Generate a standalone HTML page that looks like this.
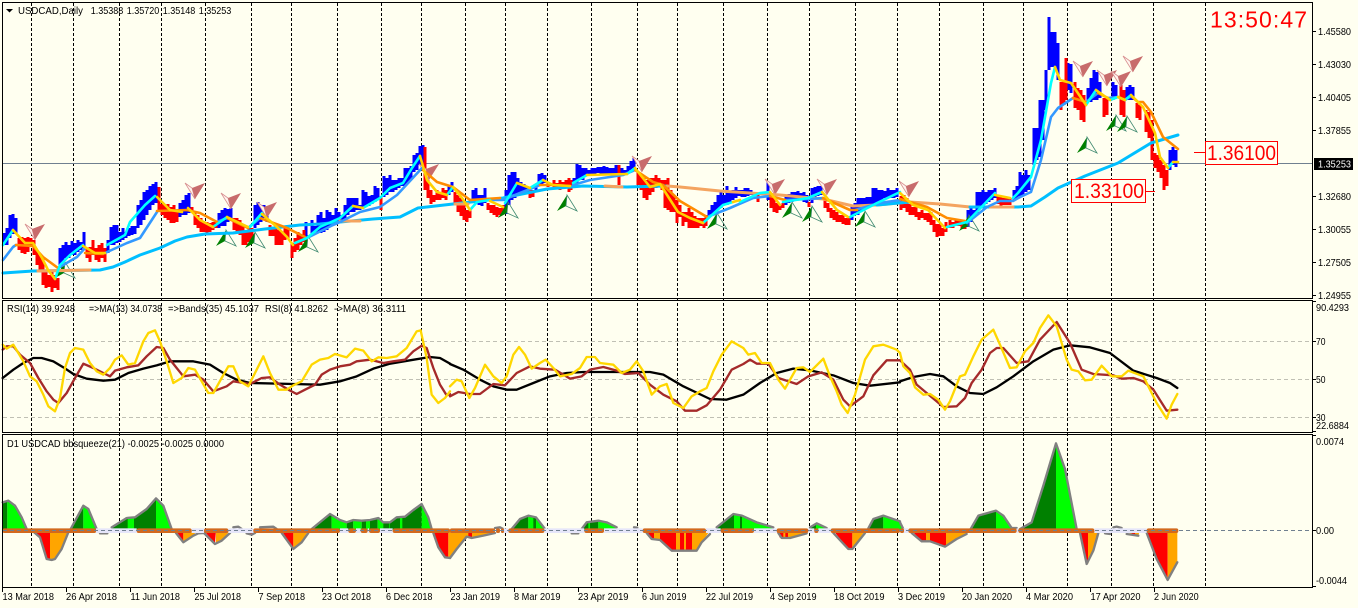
<!DOCTYPE html>
<html><head><meta charset="utf-8"><title>USDCAD,Daily</title>
<style>
html,body{margin:0;padding:0;background:#fffff0;width:1358px;height:608px;overflow:hidden}
svg{display:block;position:absolute;left:0;top:0}
text{font-family:"Liberation Sans",sans-serif;font-size:10.5px;fill:#000}
.l{fill:none;stroke-linejoin:round;stroke-linecap:round}
</style></head><body>
<svg width="1358" height="608" viewBox="0 0 1358 608">
<rect width="1358" height="608" fill="#fffff0"/>
<!-- grid -->
<path d="M31.5 3V587M73.5 3V587M119.5 3V587M161.5 3V587M205.5 3V587M251.5 3V587M291.5 3V587M337.5 3V587M381.5 3V587M421.5 3V587M465.5 3V587M505.5 3V587M547.5 3V587M591.5 3V587M637.5 3V587M677.5 3V587M723.5 3V587M767.5 3V587M809.5 3V587M855.5 3V587M897.5 3V587M939.5 3V587M983.5 3V587M1023.5 3V587M1067.5 3V587M1111.5 3V587M1153.5 3V587M1205.5 3V587" stroke="#000" stroke-width="1" stroke-dasharray="3 2" fill="none" shape-rendering="crispEdges"/>
<path d="M3 341.5H1312M3 379.5H1312M3 417.5H1312" stroke="#c0c0b4" stroke-dasharray="4 3" fill="none" shape-rendering="crispEdges"/>
<path d="M3 163.5H1313" stroke="#708090" fill="none" shape-rendering="crispEdges"/>

<!-- candles -->
<path fill="none" stroke="#0000ff" stroke-width="3" shape-rendering="crispEdges" d="M4 233V245M7 228V245M10 215V238M13 214V234M16 218V233
M60 248V268M63 245V262M66 242V258M69 245V258M72 241V255M75 243V255M78 240V252M81 242V250M84 232V248
M108 240V253M111 227V245M114 225V245M117 225V243M120 232V242M123 228V240M126 232V238M129 228V236M132 226V235M135 226V234M138 205V228M141 200V225M144 192V220M147 190V215M150 186V210M153 184V205M156 182V203
M180 203V217M183 200V215M186 195V215M189 193V213
M219 213V228M222 210V226M225 208V226M228 209V222M231 208V220
M255 205V228M258 202V225M261 205V222M264 205V218M267 210V222
M306 222V240M312 220V235M315 226V232
M318 215V233M321 212V233M324 218V232M327 210V230M330 212V226M333 215V225M336 208V222M339 212V222M342 215V223M345 205V220M348 198V215M351 198V212M354 198V212M357 198V210M360 205V210M363 190V208M366 192V207M369 196V206M372 195V204M375 186V202M378 188V200
M384 176V197M387 178V195M390 175V192M393 180V192M396 180V190M399 178V188M402 178V186M405 168V186M408 168V183M411 166V180M414 155V172M417 153V170M420 146V165M423 145V163
M449 186V195M452 182V192
M473 190V203M476 188V203M479 195V205M482 195V206M485 188V203
M506 190V214M509 175V205M512 172V200M515 172V198M518 178V195M521 182V195M524 184V192M527 187V193
M536 185V190M539 174V185M542 173V184M545 175V183
M574 178V186M577 164V184M580 165V180M583 168V180M586 168V176M589 170V176M592 168V174M595 168V175M598 167V173M601 167V175M604 166V174M607 167V174M610 168V175M613 168V175M616 165V175
M622 168V174M625 170V174M628 166V172M631 161V170M634 158V168
M709 210V218M712 205V216M715 202V214M718 195V210M721 192V208M724 195V205M727 186V205M730 192V203M733 190V200M736 187V198M739 190V196M742 190V197M745 188V197M748 188V196M751 190V195M754 192V197
M768 182V200
M786 195V205M789 194V203M792 192V202M795 192V200M798 191V200M801 193V200M804 192V202M807 195V203
M812 188V203M815 187V198M818 186V196M821 186V195
M852 207V220M855 203V215M858 198V215M861 198V212M864 198V210M867 197V206M870 197V204M873 188V205M876 188V203M879 190V202M882 190V202M885 191V198M888 188V197M891 190V198M894 190V198M897 188V197
M968 210V227M971 207V222M974 210V218M977 192V213M980 192V208M983 190V206M986 192V204M989 190V202M992 190V200M995 188V198
M1014 190V200M1017 186V198M1020 172V196M1023 175V195M1026 170V192M1029 175V190
M1034 128V165M1037 128V160M1040 100V157M1043 100V140M1046 70V110M1049 17V70M1052 32V67M1055 32V67M1058 43V80
M1068 63V90M1071 64V93
M1088 88V102M1091 78V102M1094 70V100M1097 72V100M1100 82V98
M1113 82V100M1116 85V98
M1127 87V100M1130 85V100M1133 87V100
M1170 150V170M1173 147V165M1176 150V167"/>
<path fill="none" stroke="#ff0000" stroke-width="3" shape-rendering="crispEdges" d="M19 238V250M22 237V253M25 238V254M28 237V252M31 238V247M34 240V255M37 250V265M40 255V270M43 258V285M46 272V288M49 275V287M52 272V292M55 275V288M58 278V290
M87 248V258M90 247V262M93 240V255M96 248V260M99 245V262M102 243V258M105 248V262
M159 187V212M162 204V215M165 205V218M168 204V220M171 207V223M174 205V223M177 210V222
M192 207V212M195 213V225M198 215V228M201 218V232M204 222V232M207 222V233M210 223V232M213 222V230M216 222V228
M234 218V230M237 218V232M240 220V235M243 226V245M246 232V245M249 228V242M252 228V240
M270 225V236M273 228V236M276 228V245M279 230V245M282 232V245M285 228V240M288 228V238
M292 243V258M295 238V252M298 232V250M301 235V245M304 230V242
M381 197V210
M425 147V190M428 180V198M431 190V204M434 195V202M437 190V200M440 192V200M443 188V198M446 190V200
M455 192V205M458 195V212M461 198V216M464 205V220M467 210V222M470 208V218
M488 203V210M491 205V213M494 205V215M497 207V217M500 208V215M503 205V212
M530 190V198M533 190V197
M548 182V187M551 184V186M554 180V188M557 183V187M560 180V190M563 182V186M566 180V188M569 178V192M571 180V190
M619 165V185
M638 172V185M641 175V190M644 178V198M647 180V200M650 178V195M653 178V192M656 175V188M659 178V186M662 180V190M665 180V208M668 178V210M671 190V212M674 195V212M677 200V223M680 205V217M683 212V226M686 212V222M689 208V228M692 212V228M695 216V228M698 218V228M701 218V226M704 218V228M706 215V226
M758 194V202
M771 197V208M774 198V212M777 203V213M780 205V210M783 203V208
M809 202V207
M825 200V208M828 203V212M831 208V218M834 210V220M837 212V222M840 215V222M843 215V224M846 218V225M849 216V225
M901 196V210M904 195V208M907 198V212M910 204V215M913 207V215M916 207V217M919 212V220M922 210V218M925 213V220M928 213V222M931 212V225M934 220V232M937 224V237M940 224V236M943 228V236M946 222V232
M950 220V228M953 222V228M956 219V226M959 220V226M962 220V229M965 222V229
M998 196V204M1001 196V206M1004 198V205M1007 197V205M1010 198V205
M1061 82V110M1064 82V105M1066 58V100
M1075 82V108M1078 88V110M1081 90V120M1084 95V122
M1104 98V117M1107 97V115
M1121 85V115M1124 90V117
M1137 103V118M1140 105V120
M1146 110V132M1149 112V138M1152 120V160M1155 153V168M1158 155V172M1161 160V178M1164 165V190M1167 170V186"/>

<!-- arrows -->
<defs>
<g id="d"><polygon points="0,0 10,16 7,5" fill="#fff4ee" stroke="#d89090" stroke-width=".8"/><polygon points="7,5 20,0 10,16" fill="#c86c6c"/></g>
<g id="u"><polygon points="0,16 10,0 9,11" fill="#008000"/><polygon points="10,0 20,16 9,11" fill="none" stroke="#408a70" stroke-width=".8"/></g>
</defs>
<use href="#d" x="25" y="224"/><use href="#d" x="185" y="183"/><use href="#d" x="221" y="193"/><use href="#d" x="257" y="202"/><use href="#d" x="419" y="164"/><use href="#d" x="632" y="156"/><use href="#d" x="765" y="179"/><use href="#d" x="817" y="179"/><use href="#d" x="899" y="181"/><use href="#d" x="1073" y="61"/><use href="#d" x="1097" y="70"/><use href="#d" x="1111" y="71"/><use href="#d" x="1123" y="56"/>
<use href="#u" x="55" y="262"/><use href="#u" x="216" y="230"/><use href="#u" x="245" y="232"/><use href="#u" x="298" y="236"/><use href="#u" x="498" y="202"/><use href="#u" x="557" y="195"/><use href="#u" x="707" y="213"/><use href="#u" x="782" y="202"/><use href="#u" x="802" y="206"/><use href="#u" x="855" y="211"/><use href="#u" x="959" y="215"/><use href="#u" x="1077" y="137"/><use href="#u" x="1106" y="115"/><use href="#u" x="1117" y="116"/>

<!-- long MA -->
<g class="l" stroke-width="3">
<polyline stroke="#00bfff" points="3,273 33,271 100,270 113,267 125,262 140,255 160,248 175,241 187,237 205,234 233,233 265,229 300,225 320,224 340,222 373,219 400,217 410,212 418,208 453,204 480,201 503,198 517,195 547,189 583,186 627,187 667,186"/>
<polyline stroke="#f4a460" points="667,186 680,187 720,191 780,195 823,199 853,206 877,205 910,202 940,204 970,207"/>
<polyline stroke="#00bfff" points="970,207 1018,207 1031,206 1045,197 1058,188 1085,176 1118,163 1151,143 1178,135"/>
<polyline stroke="#00bfff" points="877,205 910,202"/>
<polyline stroke="#f4a460" points="38,271 90,270"/>
<polyline stroke="#f4a460" points="340,221 360,221"/>
<polyline stroke="#f4a460" points="455,204 468,204"/>
<polyline stroke="#f4a460" points="990,207 1013,207"/>
<polyline stroke="#f4a460" points="605,186 622,187"/>
</g>

<!-- slow line -->
<g class="l" stroke-width="2.6" stroke="#3399ff">
<polyline points="3,260 13,247 16,245"/>
<polyline points="58,268 77,257 85,248"/>
<polyline points="105,253 127,243 140,238 157,212"/>
<polyline points="217,222 227,218"/>
<polyline points="248,228 260,218"/>
<polyline points="307,238 333,225 340,222 360,212 380,207 397,195 422,168"/>
<polyline points="470,200 503,200 520,193 540,185"/>
<polyline points="573,185 590,180 623,175 635,170"/>
<polyline points="707,217 730,208 753,198 770,196"/>
<polyline points="785,200 810,199 823,198"/>
<polyline points="855,210 880,203 900,200"/>
<polyline points="967,223 987,207 1000,201 1013,201 1020,197"/>
<polyline points="1018,198 1031,192 1041,160 1051,117 1058,108 1073,98"/>
<polyline points="1086,102 1098,93"/>
<polyline points="1108,98 1118,97"/>
<polyline points="1125,100 1131,96"/>
</g>
<g class="l" stroke-width="2.6" stroke="#ff8c00">
<polyline points="16,245 33,246 43,257 58,268"/>
<polyline points="85,253 103,254"/>
<polyline points="157,211 187,210 200,213 217,222"/>
<polyline points="227,218 248,228"/>
<polyline points="260,218 287,228 307,238"/>
<polyline points="423,170 437,182 453,187 470,200 500,198"/>
<polyline points="540,185 553,185 570,186"/>
<polyline points="635,170 653,182 663,185 680,201 707,217"/>
<polyline points="770,196 785,200"/>
<polyline points="823,198 850,210 857,210"/>
<polyline points="900,199 927,207 947,218 965,221"/>
<polyline points="1073,98 1086,102"/>
<polyline points="1098,93 1108,98"/>
<polyline points="1118,97 1125,100"/>
<polyline points="1131,96 1138,102 1143,102 1151,112 1163,137 1178,149"/>
</g>

<!-- fast line -->
<g class="l" stroke-width="2.6" stroke="#00ffff">
<polyline points="3,245 13,230"/>
<polyline points="55,279 60,265 70,255 83,245"/>
<polyline points="107,245 125,235 130,222 145,205 155,196"/>
<polyline points="213,227 227,217"/>
<polyline points="250,227 262,213"/>
<polyline points="295,243 307,238 320,227 340,218 353,206"/>
<polyline points="363,208 380,198 390,188 403,183 412,168 420,156"/>
<polyline points="447,195 453,187"/>
<polyline points="470,210 477,202 490,200"/>
<polyline points="505,203 517,183"/>
<polyline points="530,188 543,180"/>
<polyline points="573,183 587,175"/>
<polyline points="627,174 635,168"/>
<polyline points="703,223 723,205 733,202"/>
<polyline points="740,202 760,193 770,192"/>
<polyline points="783,202 808,198 822,192"/>
<polyline points="850,217 877,203 900,192"/>
<polyline points="947,227 967,222 995,193"/>
<polyline points="1013,198 1018,193 1031,177 1041,140 1051,83 1055,67"/>
<polyline points="1086,105 1096,90"/>
<polyline points="1110,100 1118,97"/>
<polyline points="1125,100 1131,95"/>
<polyline points="1168,168 1173,162"/>
</g>
<g class="l" stroke-width="2.6" stroke="#ffd000">
<polyline points="13,230 25,243 33,243 42,258 48,270 55,279"/>
<polyline points="83,246 95,253 105,253"/>
<polyline points="157,197 170,210 182,212"/>
<polyline points="188,208 200,220 213,227"/>
<polyline points="227,217 248,227"/>
<polyline points="262,214 277,227 287,237 293,245"/>
<polyline points="353,206 363,208"/>
<polyline points="420,156 427,180 437,192 447,195"/>
<polyline points="453,187 462,198 470,210"/>
<polyline points="490,201 503,207"/>
<polyline points="517,183 530,188"/>
<polyline points="543,180 553,185 570,186"/>
<polyline points="587,175 627,174"/>
<polyline points="635,168 650,187 660,184 678,212 690,218 703,223"/>
<polyline points="733,202 740,200"/>
<polyline points="770,192 780,205"/>
<polyline points="822,192 837,210 848,217"/>
<polyline points="900,193 913,205 928,210 945,228"/>
<polyline points="995,195 1010,198"/>
<polyline points="1055,67 1060,80 1071,83 1086,105"/>
<polyline points="1096,90 1110,100"/>
<polyline points="1118,97 1125,100"/>
<polyline points="1131,95 1143,107 1155,133 1160,157 1168,168"/>
<polyline points="1173,162 1178,162"/>
</g>

<!-- labels -->
<path d="M1194 152.5H1205M1145 191.5H1155" stroke="#ff0000" fill="none" shape-rendering="crispEdges"/>
<rect x="1205.5" y="141.5" width="72" height="23" fill="#fffff0" stroke="#ff0000"/>
<text x="1207" y="160" style="font-size:21px;fill:#ff0000" textLength="69" lengthAdjust="spacingAndGlyphs">1.36100</text>
<rect x="1071.5" y="179.5" width="74" height="23" fill="#fffff0" stroke="#ff0000"/>
<text x="1074" y="198" style="font-size:21px;fill:#ff0000" textLength="70" lengthAdjust="spacingAndGlyphs">1.33100</text>
<text x="1210" y="27.5" style="font-size:23px;fill:#ff0000" textLength="97">13:50:47</text>

<!-- RSI -->
<g transform="translate(0,298) scale(.33333)" class="l" stroke-width="7">
<polyline stroke="#000" points="8,240 40,215 70,195 100,180 125,180 160,190 190,208 220,228 260,242 310,248 345,245 385,225 430,212 470,202 510,190 580,190 630,200 670,225 710,245 750,255 880,258 960,260 1020,250 1070,235 1120,212 1170,197 1230,187 1290,177 1320,180 1350,197"/>
<polyline stroke="#a52a2a" points="8,155 20,145 40,145 60,170 90,195 115,240 140,280 160,305 175,315 200,285 225,240 250,197 280,210 310,225 330,235 345,218 380,208 415,202 440,175 470,147 490,150 510,185 530,210 550,235 585,230 610,245 640,280 680,265 700,250 750,258 785,240 810,238 840,260 865,275 890,288 915,275 945,260 965,230 990,215 1020,205 1050,200 1070,190 1110,185 1150,195 1180,190 1215,185 1240,160 1265,143 1280,150 1300,210 1320,260 1340,292 1350,288"/>
<polyline stroke="#ffd700" points="8,140 20,152 40,140 55,165 70,190 90,235 110,250 130,290 145,325 165,340 180,300 195,210 210,165 225,150 250,155 270,195 290,220 310,230 330,210 345,185 365,172 385,200 405,195 430,130 445,105 465,97 480,130 500,190 520,255 545,240 565,210 585,215 605,250 625,285 640,285 665,240 685,205 700,205 720,250 745,265 770,215 790,175 810,225 835,275 860,275 880,262 905,250 935,200 960,185 985,180 1005,168 1040,178 1065,152 1090,158 1115,190 1135,178 1160,180 1190,175 1220,150 1250,100 1262,97 1280,180 1295,290 1315,315 1335,300 1350,280"/>
</g>
<g transform="translate(450,298) scale(.33333)" class="l" stroke-width="7">
<polyline stroke="#000" points="0,198 40,215 90,245 130,265 170,275 200,275 250,255 300,235 350,225 400,222 600,222 640,230 700,265 780,303 830,305 880,290 930,255 980,225 1030,212 1080,217 1150,232 1210,255 1260,263 1350,253"/>
<polyline stroke="#a52a2a" points="0,295 25,282 60,288 90,288 130,258 165,262 200,225 240,205 270,212 315,215 360,242 395,235 420,215 460,207 500,218 525,228 565,225 600,260 640,290 680,310 705,338 740,338 770,322 810,275 845,215 880,198 900,185 920,197 955,197 985,240 1040,258 1075,235 1115,223 1150,245 1180,305 1200,325 1240,295 1270,232 1310,187 1350,187"/>
<polyline stroke="#ffd700" points="0,265 20,245 35,250 58,300 75,270 105,200 130,235 155,255 170,235 190,170 207,147 225,170 245,212 270,195 287,185 310,210 330,235 365,228 390,210 410,177 435,177 450,195 490,200 515,225 540,215 560,190 580,220 605,290 630,265 650,258 670,315 700,330 725,295 750,280 770,270 790,220 815,170 845,130 880,150 895,170 915,165 935,195 960,195 985,245 1005,272 1040,210 1060,208 1080,222 1120,182 1140,235 1160,280 1175,320 1193,345 1215,290 1245,185 1270,145 1300,140 1340,155 1350,165"/>
</g>
<g transform="translate(900,298) scale(.33333)" class="l" stroke-width="7">
<polyline stroke="#000" points="0,250 40,237 90,228 130,235 170,265 210,285 250,288 290,268 340,235 400,190 460,155 510,142 570,148 630,165 700,218 770,240 810,255 832,270"/>
<polyline stroke="#a52a2a" points="0,187 30,215 50,260 80,285 110,310 130,327 170,325 195,300 215,255 245,215 270,165 290,150 310,150 350,195 385,190 420,125 470,72 510,135 545,215 580,228 640,232 665,242 700,240 730,250 760,275 800,338 832,335"/>
<polyline stroke="#ffd700" points="0,165 10,205 30,225 45,268 70,290 90,288 115,305 135,335 150,310 180,235 195,230 220,175 245,125 280,95 300,140 330,210 350,208 375,160 400,135 420,90 445,52 470,85 500,185 515,215 535,220 555,247 575,245 605,203 635,235 665,235 685,218 730,235 745,265 770,315 800,362 815,320 832,288"/>
</g>

<!-- squeeze -->
<g transform="translate(0,434) scale(.33333)">
<g>
<polygon fill="#008000" points="8,290 8,205 22,201 22,290"/>
<polygon fill="#00ff00" points="22,290 22,201 45,215 65,250 80,285 82,290"/>
<polygon fill="#ff0000" points="100,290 120,310 140,375 150,378 150,290"/>
<polygon fill="#ffa500" points="150,290 150,378 165,375 185,345 205,290"/>
<polygon fill="#008000" points="212,290 250,215 250,290"/>
<polygon fill="#00ff00" points="250,290 250,215 265,225 290,290"/>
<polygon fill="#008000" points="335,290 335,280 380,252 405,250 440,225 468,193 468,290"/>
<polygon fill="#00ff00" points="383,290 383,252 402,250 402,290"/>
<polygon fill="#00ff00" points="468,290 468,193 490,215 515,285 515,290"/>
<polygon fill="#ff0000" points="528,290 550,325 550,290"/>
<polygon fill="#ffa500" points="550,290 550,325 580,305 590,290"/>
<polygon fill="#ff0000" points="612,290 645,330 648,290"/>
<polygon fill="#ffa500" points="648,290 648,330 665,320 690,290"/>
<polygon fill="#ff0000" points="738,290 755,302 760,290"/>
<polygon fill="#ff0000" points="845,290 880,345 880,290"/>
<polygon fill="#ffa500" points="880,290 880,345 905,325 925,290"/>
<polygon fill="#008000" points="935,290 990,240 995,240 995,290"/>
<polygon fill="#00ff00" points="995,290 995,240 1020,258 1040,265 1040,290"/>
<polygon fill="#008000" points="1040,290 1040,265 1060,258 1060,290"/>
<polygon fill="#00ff00" points="1060,290 1060,258 1085,260 1085,290"/>
<polygon fill="#008000" points="1085,290 1085,258 1098,258 1098,290"/>
<polygon fill="#00ff00" points="1098,290 1098,258 1110,260 1110,290"/>
<polygon fill="#008000" points="1110,290 1110,258 1133,252 1133,290"/>
<polygon fill="#00ff00" points="1133,290 1133,252 1150,265 1170,265 1170,290"/>
<polygon fill="#008000" points="1150,290 1150,265 1168,265 1168,290"/>
<polygon fill="#008000" points="1170,290 1170,265 1190,250 1215,248 1240,228 1265,210 1265,290"/>
<polygon fill="#00ff00" points="1200,290 1200,248 1207,248 1207,290"/>
<polygon fill="#00ff00" points="1265,290 1265,210 1285,250 1297,290"/>
<polygon fill="#ff0000" points="1297,290 1315,340 1335,370 1345,372 1345,290"/>
<polygon fill="#ffa500" points="1345,290 1345,372 1350,372 1350,290"/>
</g>
<g class="l" stroke="#808080" stroke-width="7">
<polyline points="8,205 25,200 45,215 65,250 80,285"/>
<polyline points="100,293 120,310 140,375 155,378 165,375 185,345 205,295"/>
<polyline points="212,285 250,215 265,225 290,285"/>
<polyline points="335,280 380,252 405,250 440,225 468,193 490,215 515,285"/>
<polyline points="528,297 550,325 580,305 595,298 612,297 645,330 665,320 690,297"/>
<polyline points="700,280 715,278 725,285"/>
<polyline points="740,298 755,302 765,297"/>
<polyline points="780,280 820,278 830,285"/>
<polyline points="845,297 880,345 905,325 925,297"/>
<polyline points="935,285 990,240 1020,258 1040,265 1060,258 1085,260 1110,258 1135,252 1150,265 1170,265 1190,250 1215,248 1240,228 1265,210 1285,250 1295,285"/>
<polyline points="1300,297 1315,340 1335,370 1350,372"/>
<polyline points="300,298 322,298"/>
</g>
<g fill="#e6e6fa"><rect x="288" y="283" width="122" height="14"/><rect x="575" y="283" width="37" height="14"/><rect x="685" y="283" width="75" height="14"/><rect x="1020" y="283" width="25" height="14"/><rect x="1068" y="283" width="14" height="14"/><rect x="1103" y="283" width="4" height="14"/><rect x="1140" y="283" width="38" height="14"/></g>
<g fill="#d2691e"><rect x="8" y="283" width="280" height="14" rx="5"/><rect x="410" y="283" width="165" height="14" rx="6"/><rect x="612" y="283" width="73" height="14" rx="6"/><rect x="760" y="283" width="260" height="14" rx="6"/><rect x="1045" y="283" width="23" height="14" rx="6"/><rect x="1082" y="283" width="21" height="14" rx="6"/><rect x="1107" y="283" width="33" height="14" rx="6"/><rect x="1178" y="283" width="172" height="14" rx="6"/></g>
</g>
<g transform="translate(450,434) scale(.33333)">
<polygon fill="#ffa500" points="0,290 0,372 20,345 50,308 55,310 65,312 100,305 135,290"/>
<polygon fill="#ff0000" points="55,290 55,310 66,310 66,290"/>
<polygon fill="#008000" points="185,290 210,255 235,245 235,290"/>
<polygon fill="#00ff00" points="235,290 235,245 258,250 285,285 285,290"/>
<polygon fill="#008000" points="250,290 250,248 258,250 258,290"/>
<polygon fill="#008000" points="395,290 410,265 445,260 445,290"/>
<polygon fill="#00ff00" points="445,290 445,262 470,265 500,282 500,290"/>
<polygon fill="#00ff00" points="415,290 415,264 420,264 420,290"/>
<polygon fill="#ffa500" points="590,290 605,315 630,318 665,350 740,350 755,325 780,290"/>
<g fill="#ff0000"><polygon points="590,290 605,315 612,316 612,290"/><polygon points="630,290 630,318 665,350 678,350 678,290"/><rect x="690" y="290" width="12" height="60"/><rect x="708" y="290" width="18" height="60"/></g>
<polygon fill="#008000" points="800,290 800,280 850,240 852,240 852,290"/>
<polygon fill="#00ff00" points="852,290 852,240 876,245 920,265 970,280 970,290"/>
<rect x="870" y="243" width="6" height="47" fill="#008000"/>
<polygon fill="#ffa500" points="985,290 995,312 1020,312 1070,295 1070,290"/>
<rect x="988" y="290" width="12" height="20" fill="#ff0000"/><rect x="1006" y="290" width="8" height="20" fill="#ff0000"/>
<polygon fill="#008000" points="1080,290 1080,280 1098,268 1098,290"/>
<polygon fill="#00ff00" points="1098,290 1098,268 1130,282 1130,290"/>
<polygon fill="#ff0000" points="1150,290 1195,345 1207,345 1207,290"/>
<polygon fill="#ffa500" points="1207,290 1207,345 1245,290"/>
<polygon fill="#008000" points="1255,290 1255,283 1270,255 1300,245 1300,290"/>
<polygon fill="#00ff00" points="1300,290 1300,245 1350,262 1350,290"/>
<g class="l" stroke="#808080" stroke-width="7">
<polyline points="0,372 20,345 50,308 65,312 100,305 135,297"/>
<polyline points="135,282 150,280 160,285"/>
<polyline points="185,285 210,255 235,245 258,250 285,285"/>
<polyline points="365,298 385,298"/>
<polyline points="395,285 410,265 445,260 470,265 500,280"/>
<polyline points="552,280 562,281"/>
<polyline points="590,297 605,315 630,318 665,350 740,350 755,325 780,300"/>
<polyline points="800,280 850,240 876,245 920,265 970,280"/>
<polyline points="985,297 995,312 1020,312 1070,298"/>
<polyline points="1080,280 1100,268 1130,282"/>
<polyline points="1150,297 1195,345 1207,345 1245,297"/>
<polyline points="1255,283 1270,255 1300,245 1350,262"/>
</g>
<g fill="#e6e6fa"><rect x="160" y="283" width="15" height="14"/><rect x="283" y="283" width="120" height="14"/><rect x="462" y="283" width="116" height="14"/><rect x="768" y="283" width="44" height="14"/><rect x="912" y="283" width="68" height="14"/><rect x="1075" y="283" width="18" height="14"/><rect x="1105" y="283" width="37" height="14"/></g>
<g fill="#d2691e"><rect x="0" y="283" width="135" height="14" rx="5"/><rect x="138" y="283" width="12" height="14" rx="5"/><rect x="153" y="283" width="9" height="14" rx="4"/><rect x="175" y="283" width="108" height="14" rx="6"/><rect x="403" y="283" width="59" height="14" rx="6"/><rect x="578" y="283" width="190" height="14" rx="6"/><rect x="812" y="283" width="100" height="14" rx="6"/><rect x="980" y="283" width="95" height="14" rx="6"/><rect x="1093" y="283" width="12" height="14" rx="5"/><rect x="1142" y="283" width="208" height="14" rx="6"/></g>
</g>
<g transform="translate(900,434) scale(.33333)">
<polygon fill="#00ff00" points="0,290 0,265 10,285 10,290"/>
<polygon fill="#ff0000" points="35,290 65,322 78,322 78,290"/>
<polygon fill="#ffa500" points="78,290 78,322 90,322 90,290"/>
<polygon fill="#ff0000" points="90,290 90,322 135,338 138,338 138,290"/>
<polygon fill="#ffa500" points="138,290 138,338 170,315 200,300 200,290"/>
<polygon fill="#008000" points="212,290 235,245 288,230 288,290"/>
<polygon fill="#00ff00" points="288,290 288,230 310,245 335,285 335,290"/>
<polygon fill="#008000" points="360,290 360,285 395,265 430,155 468,28 468,290"/>
<polygon fill="#00ff00" points="468,290 468,28 495,105 530,285 530,290"/>
<polygon fill="#ff0000" points="540,290 560,390 564,390 564,290"/>
<polygon fill="#ffa500" points="564,290 564,390 580,350 595,290"/>
<polygon fill="#ffa500" points="680,295 715,305 718,295"/>
<polygon fill="#ff0000" points="695,295 695,303 705,303 705,295"/>
<polygon fill="#ff0000" points="740,290 770,375 803,438 803,290"/>
<polygon fill="#ffa500" points="803,290 803,438 832,385 832,290"/>
<g class="l" stroke="#808080" stroke-width="7">
<polyline points="0,265 10,285"/>
<polyline points="35,297 65,322 90,322 135,338 170,315 200,300"/>
<polyline points="212,285 235,245 288,230 310,245 335,282 350,282"/>
<polyline points="360,285 395,265 430,155 468,28 495,105 530,285"/>
<polyline points="540,297 560,390 580,350 595,297"/>
<polyline points="615,298 630,300"/>
<polyline points="640,280 650,278 665,282"/>
<polyline points="680,300 715,305"/>
<polyline points="740,297 770,375 803,438 832,385"/>
</g>
<g fill="#e6e6fa"><rect x="10" y="283" width="15" height="14"/><rect x="350" y="283" width="5" height="14"/><rect x="583" y="283" width="157" height="14"/></g>
<g fill="#d2691e"><rect x="0" y="283" width="12" height="14" rx="5"/><rect x="25" y="283" width="325" height="14" rx="6"/><rect x="355" y="283" width="228" height="14" rx="6"/><rect x="740" y="283" width="95" height="14" rx="6"/></g>
</g>
<path d="M3 530.5H1312" stroke="#708090" stroke-dasharray="4 3" fill="none" shape-rendering="crispEdges"/>

<!-- frames -->
<g fill="none" stroke="#000" shape-rendering="crispEdges">
<rect x="2.5" y="2.5" width="1310" height="296"/>
<rect x="2.5" y="300.5" width="1310" height="132"/>
<rect x="2.5" y="434.5" width="1310" height="153"/>
<path d="M1313 31.5h3M1313 64.5h3M1313 97.5h3M1313 130.5h3M1313 196.5h3M1313 229.5h3M1313 262.5h3M1313 295.5h3M1313 301.5h3M1313 341.5h3M1313 379.5h3M1313 417.5h3M1313 431.5h3M1313 435.5h3M1313 530.5h3M1313 586.5h3"/>
<path d="M2.5 588v4M66.5 588v4M130.5 588v4M194.5 588v4M258.5 588v4M322.5 588v4M386.5 588v4M450.5 588v4M514.5 588v4M578.5 588v4M642.5 588v4M706.5 588v4M770.5 588v4M834.5 588v4M898.5 588v4M962.5 588v4M1026.5 588v4M1090.5 588v4M1154.5 588v4"/>
</g>

<!-- header text -->
<polygon points="6,9 13,9 9.5,12.5" fill="#000"/>
<text x="18" y="14" textLength="65" lengthAdjust="spacingAndGlyphs">USDCAD,Daily</text>
<text x="90.7" y="14" textLength="32.6" lengthAdjust="spacingAndGlyphs">1.35388</text><text x="126.7" y="14" textLength="32.6" lengthAdjust="spacingAndGlyphs">1.35720</text><text x="162.7" y="14" textLength="32.6" lengthAdjust="spacingAndGlyphs">1.35148</text><text x="198.7" y="14" textLength="32.6" lengthAdjust="spacingAndGlyphs">1.35253</text>
<text x="7" y="312" textLength="68" lengthAdjust="spacingAndGlyphs">RSI(14) 39.9248</text><text x="89" y="312" textLength="73" lengthAdjust="spacingAndGlyphs">=&gt;MA(13) 34.0738</text><text x="168" y="312" textLength="91" lengthAdjust="spacingAndGlyphs">=&gt;Bands(35) 45.1037</text><text x="265" y="312" textLength="63" lengthAdjust="spacingAndGlyphs">RSI(8) 41.8262</text><text x="334" y="312" textLength="72" lengthAdjust="spacingAndGlyphs">-&gt;MA(8) 36.3111</text>
<text x="7" y="447" textLength="217" lengthAdjust="spacingAndGlyphs">D1 USDCAD bbsqueeze(21) -0.0025 -0.0025 0.0000</text>

<!-- price axis -->
<text x="1318" y="35" textLength="33" lengthAdjust="spacingAndGlyphs">1.45580</text><text x="1318" y="68" textLength="33" lengthAdjust="spacingAndGlyphs">1.43030</text><text x="1318" y="101" textLength="33" lengthAdjust="spacingAndGlyphs">1.40405</text><text x="1318" y="134" textLength="33" lengthAdjust="spacingAndGlyphs">1.37855</text><text x="1318" y="200" textLength="33" lengthAdjust="spacingAndGlyphs">1.32680</text><text x="1318" y="233" textLength="33" lengthAdjust="spacingAndGlyphs">1.30055</text><text x="1318" y="266" textLength="33" lengthAdjust="spacingAndGlyphs">1.27505</text><text x="1318" y="299" textLength="33" lengthAdjust="spacingAndGlyphs">1.24955</text>
<rect x="1314" y="158" width="39" height="12" fill="#000"/>
<text x="1318" y="167.5" style="fill:#fff" textLength="33" lengthAdjust="spacingAndGlyphs">1.35253</text>
<text x="1316" y="311" textLength="33" lengthAdjust="spacingAndGlyphs">90.4293</text><text x="1316" y="345" textLength="9.5" lengthAdjust="spacingAndGlyphs">70</text><text x="1316" y="383" textLength="9.5" lengthAdjust="spacingAndGlyphs">50</text><text x="1316" y="421" textLength="9.5" lengthAdjust="spacingAndGlyphs">30</text><text x="1316" y="429" textLength="33" lengthAdjust="spacingAndGlyphs">22.6884</text>
<text x="1316" y="445" textLength="28" lengthAdjust="spacingAndGlyphs">0.0074</text><text x="1316" y="534" textLength="18" lengthAdjust="spacingAndGlyphs">0.00</text><text x="1316" y="584" textLength="31" lengthAdjust="spacingAndGlyphs">-0.0044</text>

<!-- time axis -->
<g>
<text x="2.5" y="600" textLength="51.5" lengthAdjust="spacingAndGlyphs">13 Mar 2018</text><text x="66" y="600" textLength="51" lengthAdjust="spacingAndGlyphs">26 Apr 2018</text><text x="130.5" y="600" textLength="49.5" lengthAdjust="spacingAndGlyphs">11 Jun 2018</text><text x="194.5" y="600" textLength="46.5" lengthAdjust="spacingAndGlyphs">25 Jul 2018</text><text x="258.5" y="600" textLength="46.5" lengthAdjust="spacingAndGlyphs">7 Sep 2018</text><text x="322" y="600" textLength="49" lengthAdjust="spacingAndGlyphs">23 Oct 2018</text><text x="386" y="600" textLength="46.5" lengthAdjust="spacingAndGlyphs">6 Dec 2018</text><text x="450.5" y="600" textLength="49.5" lengthAdjust="spacingAndGlyphs">23 Jan 2019</text><text x="514" y="600" textLength="46.5" lengthAdjust="spacingAndGlyphs">8 Mar 2019</text><text x="578" y="600" textLength="50.5" lengthAdjust="spacingAndGlyphs">23 Apr 2019</text><text x="642" y="600" textLength="44.5" lengthAdjust="spacingAndGlyphs">6 Jun 2019</text><text x="706" y="600" textLength="47" lengthAdjust="spacingAndGlyphs">22 Jul 2019</text><text x="770" y="600" textLength="46.5" lengthAdjust="spacingAndGlyphs">4 Sep 2019</text><text x="834" y="600" textLength="50.5" lengthAdjust="spacingAndGlyphs">18 Oct 2019</text><text x="898" y="600" textLength="47" lengthAdjust="spacingAndGlyphs">3 Dec 2019</text><text x="962" y="600" textLength="50" lengthAdjust="spacingAndGlyphs">20 Jan 2020</text><text x="1026" y="600" textLength="47" lengthAdjust="spacingAndGlyphs">4 Mar 2020</text><text x="1090.5" y="600" textLength="50" lengthAdjust="spacingAndGlyphs">17 Apr 2020</text><text x="1154" y="600" textLength="44.7" lengthAdjust="spacingAndGlyphs">2 Jun 2020</text>
</g>
</svg>
</body></html>
